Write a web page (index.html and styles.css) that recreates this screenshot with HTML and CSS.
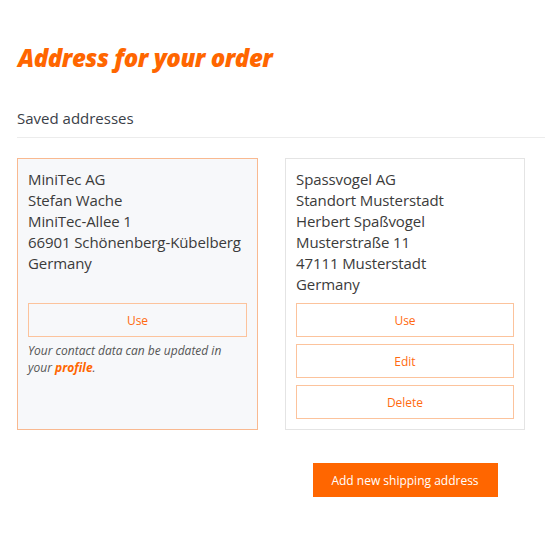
FILE: index.html
```html
<!DOCTYPE html>
<html lang="en">
<head>
<meta charset="utf-8">
<title>Address for your order</title>
<link rel="stylesheet" href="styles.css">
</head>
<body>
<main class="page">
  <h1 class="title">Address for your order</h1>
  <h2 class="subtitle">Saved addresses</h2>
  <div class="cards">
    <section class="card card-active">
      <div class="address">
        <div>MiniTec AG</div>
        <div>Stefan Wache</div>
        <div>MiniTec-Allee 1</div>
        <div>66901 Schönenberg-Kübelberg</div>
        <div>Germany</div>
      </div>
      <div class="actions">
        <button class="btn-outline">Use</button>
      </div>
      <p class="note">Your contact data can be updated in your <a href="#" class="link">profile</a>.</p>
    </section>
    <section class="card">
      <div class="address">
        <div>Spassvogel AG</div>
        <div>Standort Musterstadt</div>
        <div>Herbert Spaßvogel</div>
        <div>Musterstraße 11</div>
        <div>47111 Musterstadt</div>
        <div>Germany</div>
      </div>
      <div class="actions">
        <button class="btn-outline">Use</button>
        <button class="btn-outline">Edit</button>
        <button class="btn-outline">Delete</button>
      </div>
    </section>
    <div class="add-cell">
      <button class="btn-primary">Add new shipping address</button>
    </div>
  </div>
</main>
</body>
</html>
```
FILE: styles.css
```css
* { box-sizing: border-box; }
html, body { margin: 0; padding: 0; background: #fff; }
body { font-family: "Open Sans", "Liberation Sans", sans-serif; color: #3b3b3b; }

.page { padding: 42px 20px 0 17px; width: 545px; }

.title {
  margin: 0 0 0 1px;
  font-size: 24px;
  line-height: 32px;
  font-weight: 800;
  font-style: italic;
  color: #ff6600;
  letter-spacing: -0.45px;
}

.subtitle {
  margin: 33px -20px 0 0;
  padding-bottom: 8px;
  font-size: 15px;
  line-height: 22px;
  font-weight: 500;
  color: #3a4048;
  border-bottom: 1px solid #ececec;
}

.cards {
  margin-top: 20px;
  display: grid;
  grid-template-columns: 241px 240px;
  column-gap: 27px;
  row-gap: 33px;
}

.card {
  border: 1px solid #e4e4e4;
  background: #fff;
  padding: 10px 10px 10px;
  display: flex;
  flex-direction: column;
}

.card-active {
  border-color: #f9b990;
  background: #f7f8fa;
}

.address {
  font-size: 15px;
  line-height: 21px;
  min-height: 126px;
  color: #3b3b3b;
  letter-spacing: -0.1px;
}

.actions {
  margin-top: 8px;
  display: flex;
  flex-direction: column;
  gap: 7px;
}

.btn-outline {
  height: 34px;
  border: 1.5px solid #fcc39c;
  background: #fff;
  color: #ff6a10;
  font-family: inherit;
  font-size: 12px;
  font-weight: 500;
  cursor: pointer;
}

.card-active .btn-outline { background: transparent; }

.note {
  margin: 5px 0 0;
  font-size: 12px;
  line-height: 17px;
  font-style: italic;
  color: #555;
}

.link {
  color: #ff6600;
  font-weight: 700;
  text-decoration: none;
}

.add-cell {
  grid-column: 2;
  display: flex;
  justify-content: center;
}

.btn-primary {
  width: 185px;
  height: 34px;
  border: none;
  background: #ff6600;
  color: #fff;
  font-family: inherit;
  font-size: 12px;
  font-weight: 500;
  cursor: pointer;
}
```
